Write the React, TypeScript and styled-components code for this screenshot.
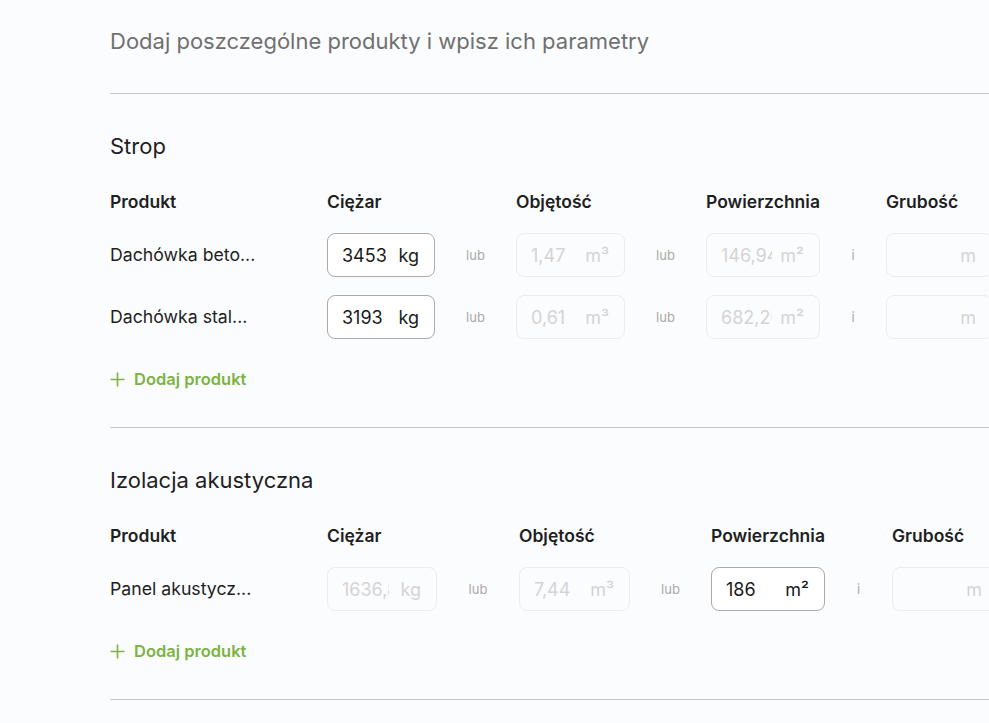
import React from "react";
import styled, { createGlobalStyle } from "styled-components";

const Global = createGlobalStyle`
  html, body { margin: 0; padding: 0; overflow: hidden; background: #fbfcfe; }
  body { font-family: Inter, "Noto Sans", sans-serif; color: #1f1f1f; }
  * { box-sizing: border-box; }
`;

const Page = styled.div`
  padding: 27px 0 0 110px;
  width: 100%;
`;

const Header = styled.div`
  padding-bottom: 38px;
  border-bottom: 1px solid #c9c9c9;
`;

const Lead = styled.h1`
  margin: 0;
  font-size: 22px;
  line-height: 28px;
  font-weight: 400;
  color: #707070;
`;

const Section = styled.section`
  padding: 38px 0 36px;
  border-bottom: 1px solid #c9c9c9;
`;

const SectionTitle = styled.h2`
  margin: 0 0 30px;
  font-size: 22px;
  line-height: 28px;
  font-weight: 400;
  color: #1f1f1f;
`;

const Grid = styled.div<{ $cols: string }>`
  display: grid;
  grid-template-columns: ${(p) => p.$cols};
  row-gap: 18px;
  align-items: center;
  width: max-content;
`;

const HeadCell = styled.div`
  font-size: 17.5px;
  line-height: 24px;
  font-weight: 600;
  color: #1f1f1f;
  margin-bottom: 1px;
`;

const Name = styled.div`
  font-size: 17.7px;
  line-height: 24px;
  color: #1f1f1f;
  white-space: nowrap;
`;

const Box = styled.label<{ $active?: boolean }>`
  display: flex;
  align-items: center;
  height: 44px;
  padding: 0 15px 0 14px;
  border: 1px solid ${(p) => (p.$active ? "#ababab" : "#ececec")};
  border-radius: 8px;
  background: ${(p) => (p.$active ? "#ffffff" : "transparent")};
`;

const Value = styled.input<{ $w: number; $active?: boolean }>`
  width: ${(p) => p.$w}px;
  flex-shrink: 0;
  border: 0;
  outline: 0;
  padding: 0;
  margin: 0;
  background: transparent;
  font-family: Inter, "Noto Sans", sans-serif;
  font-size: 18px;
  color: ${(p) => (p.$active ? "#1a1a1a" : "#d4d4d4")};
  -webkit-text-fill-color: ${(p) => (p.$active ? "#1a1a1a" : "#d4d4d4")};
  opacity: 1;
`;

const Unit = styled.span<{ $active?: boolean }>`
  margin-left: auto;
  font-size: 18px;
  color: ${(p) => (p.$active ? "#1a1a1a" : "#d4d4d4")};
  white-space: nowrap;
`;

const Joiner = styled.div`
  text-align: center;
  font-size: 13px;
  color: #a8a8a8;
`;

const AddButton = styled.button`
  display: flex;
  align-items: center;
  gap: 9px;
  margin-top: 28px;
  padding: 0;
  border: 0;
  background: none;
  font-family: Inter, "Noto Sans", sans-serif;
  font-size: 16.5px;
  line-height: 24px;
  font-weight: 600;
  color: #7cb342;
  cursor: pointer;
`;

type Field = { value: string; unit: string; active?: boolean; w: number };
type Row = { name: string; fields: Field[] };

const Input = ({ f }: { f: Field }) => (
  <Box $active={f.active}>
    <Value $w={f.w} $active={f.active} value={f.value} readOnly disabled={!f.active} />
    <Unit $active={f.active}>{f.unit}</Unit>
  </Box>
);

const Plus = () => (
  <svg width="15" height="15" viewBox="0 0 15 15" fill="none" stroke="#7cb342" strokeWidth="1.6">
    <path d="M7.5 0.5v14M0.5 7.5h14" />
  </svg>
);

const ProductSection = ({ title, cols, rows }: { title: string; cols: string; rows: Row[] }) => (
  <Section>
    <SectionTitle>{title}</SectionTitle>
    <Grid $cols={cols}>
      <HeadCell>Produkt</HeadCell>
      <HeadCell>Ciężar</HeadCell>
      <div />
      <HeadCell>Objętość</HeadCell>
      <div />
      <HeadCell>Powierzchnia</HeadCell>
      <div />
      <HeadCell>Grubość</HeadCell>
      {rows.map((r) => (
        <React.Fragment key={r.name}>
          <Name>{r.name}</Name>
          <Input f={r.fields[0]} />
          <Joiner>lub</Joiner>
          <Input f={r.fields[1]} />
          <Joiner>lub</Joiner>
          <Input f={r.fields[2]} />
          <Joiner>i</Joiner>
          <Input f={r.fields[3]} />
        </React.Fragment>
      ))}
    </Grid>
    <AddButton>
      <Plus />
      Dodaj produkt
    </AddButton>
  </Section>
);

export default function App() {
  return (
    <>
      <Global />
      <Page>
        <Header>
          <Lead>Dodaj poszczególne produkty i wpisz ich parametry</Lead>
        </Header>
        <ProductSection
          title="Strop"
          cols="217px 108px 81px 109px 81px 114px 66px 106px"
          rows={[
            {
              name: "Dachówka beto...",
              fields: [
                { value: "3453", unit: "kg", active: true, w: 47 },
                { value: "1,47", unit: "m³", w: 50 },
                { value: "146,94", unit: "m²", w: 51 },
                { value: "", unit: "m", w: 50 },
              ],
            },
            {
              name: "Dachówka stal...",
              fields: [
                { value: "3193", unit: "kg", active: true, w: 47 },
                { value: "0,61", unit: "m³", w: 50 },
                { value: "682,20", unit: "m²", w: 51 },
                { value: "", unit: "m", w: 50 },
              ],
            },
          ]}
        />
        <ProductSection
          title="Izolacja akustyczna"
          cols="217px 110px 82px 111px 81px 114px 67px 106px"
          rows={[
            {
              name: "Panel akustycz...",
              fields: [
                { value: "1636,8", unit: "kg", w: 47 },
                { value: "7,44", unit: "m³", w: 50 },
                { value: "186", unit: "m²", active: true, w: 51 },
                { value: "", unit: "m", w: 50 },
              ],
            },
          ]}
        />
      </Page>
    </>
  );
}
